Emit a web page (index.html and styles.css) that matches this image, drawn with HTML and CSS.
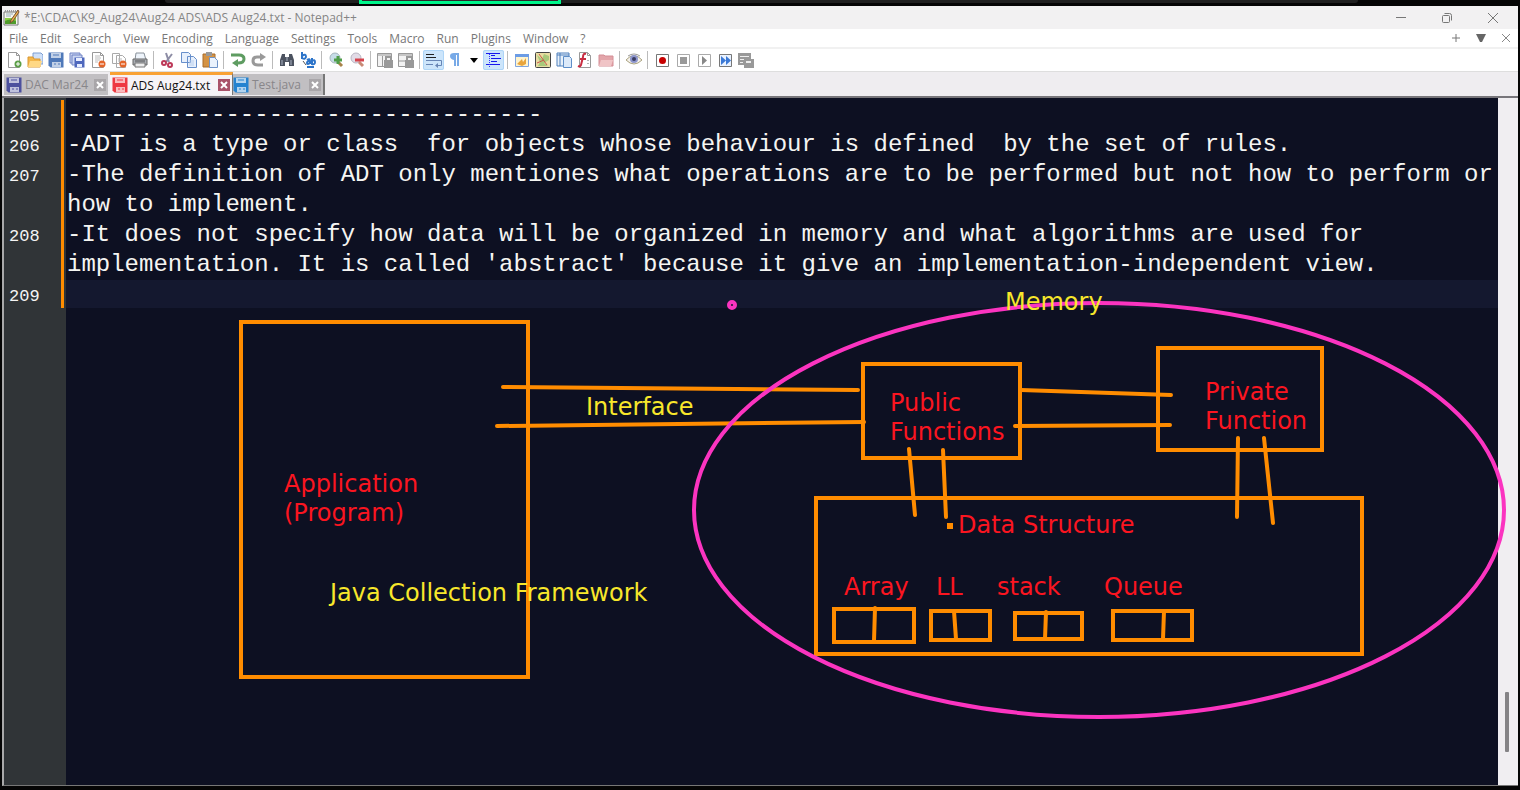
FILE: index.html
```html
<!DOCTYPE html>
<html lang="en">
<head>
<meta charset="utf-8">
<title>*E:\CDAC\K9_Aug24\Aug24 ADS\ADS Aug24.txt - Notepad++</title>
<link rel="stylesheet" href="styles.css">
</head>
<body>
<svg class="symbols" aria-hidden="true">
  <symbol id="floppy" viewBox="0 0 16 16"><path d="M0.500.5h15v15h-13l-2-2z" fill="currentColor"/><path d="M3 1h10v5H3zM4 10h9v5H4z" fill="#fff" opacity=".65"/><path d="M5 3h6M1 8h14M6 12h2M10 12h2" stroke="currentColor" stroke-width="1"/></symbol>
  <symbol id="page" viewBox="0 0 16 16"><path d="M2.500.5h8l3 3v12h-11z" fill="#fff" stroke="#999"/><path d="M10.500.5v3h3" fill="none" stroke="#999"/></symbol>
  <symbol id="cross" viewBox="0 0 12 12"><path d="M0 0h12v12H0z" fill="currentColor"/><path d="M3 3l6 6M9 3l-6 6" stroke="#fff" stroke-width="2"/></symbol>
</svg>

<div class="screen">
  <div class="share-strip"><div class="share-bar"></div><div class="share-box"></div></div>
  <div class="window">
    <header class="titlebar">
      <svg class="app-icon" viewBox="0 0 17 17"><path d="M1 3h14v13H1z" fill="#f6f8ee" stroke="#777"/><path d="M2 9h11v6H2z" fill="#8ccf45"/><path d="M2 12q5-3 11 0v3H2z" fill="#4f9c2b"/><path d="M2 2h12" stroke="#999" stroke-width="2" stroke-dasharray="1 1"/><path d="M3 5h7M3 7h5" stroke="#9ab"/><path d="M15 1L8 11l-1 3 3-2 6-9z" fill="#efb34d" stroke="#775232"/></svg>
      <h1 class="title">*E:\CDAC\K9_Aug24\Aug24 ADS\ADS Aug24.txt - Notepad++</h1>
      <div class="window-buttons">
        <button aria-label="Minimize"><svg viewBox="0 0 12 12"><path d="M1 5.500h10"/></svg></button>
        <button aria-label="Restore"><svg viewBox="0 0 12 12"><rect x="1.500" y="3.500" width="7" height="7" rx="1"/><path d="M3.500 1.500h5q2 0 2 2v5"/></svg></button>
        <button aria-label="Close"><svg viewBox="0 0 12 12"><path d="M1 1l10 10M11 1L1 11"/></svg></button>
      </div>
    </header>

    <nav class="menubar">
      <button>File</button><button>Edit</button><button>Search</button><button>View</button><button>Encoding</button><button>Language</button><button>Settings</button><button>Tools</button><button>Macro</button><button>Run</button><button>Plugins</button><button>Window</button><button>?</button>
      <div class="menu-right">
        <button aria-label="New tab"><svg viewBox="0 0 10 10"><path d="M5 1v8M1 5h8" stroke="#777"/></svg></button>
        <button aria-label="Tab list"><svg viewBox="0 0 10 10"><path d="M0 1h10L6 9H4z" fill="#666"/></svg></button>
        <button aria-label="Close tab"><svg viewBox="0 0 10 10"><path d="M1 1l8 8M9 1L1 9" stroke="#888"/></svg></button>
      </div>
    </nav>

    <div class="toolbar" role="toolbar" aria-label="Main">
      <button aria-label="New"><svg viewBox="0 0 16 16"><use href="#page"/><circle cx="12" cy="12" r="3.500" fill="#5c9f48"/><path d="M12 10v4M10 12h4" stroke="#fff"/></svg></button>
      <button aria-label="Open"><svg viewBox="0 0 16 16"><path d="M6 1h8l2 2v9H6z" fill="#cfe0f8" stroke="#7c9ed2"/><path d="M1 5h5l1 2h6v8H1z" fill="#f4b74b" stroke="#d99730"/><path d="M3 9h12l-2 6H1z" fill="#ffd884"/></svg></button>
      <button aria-label="Save"><svg class="blue" viewBox="0 0 16 16"><use href="#floppy"/></svg></button>
      <button aria-label="Save all"><svg viewBox="0 0 16 16"><path d="M1 1h10v10H1z" fill="#cbd6f2" stroke="#7183c4"/><path d="M3 3h10v10H3z" fill="#cbd6f2" stroke="#7183c4"/><path d="M5.500 5.500h10v10h-10z" fill="#4f68bd"/><path d="M7 6h6v3H7zM8 12h5v3H8z" fill="#e8eeff"/></svg></button>
      <button aria-label="Close"><svg viewBox="0 0 16 16"><use href="#page"/><path d="M5 4h5M5 6h6M5 8h5M5 10h3" stroke="#bbb"/><circle cx="12" cy="12" r="3.500" fill="#e4652a"/><path d="M10 12h4" stroke="#fff"/></svg></button>
      <button aria-label="Close all"><svg viewBox="0 0 16 16"><path d="M1.500 1.500h7v10h-7zM5.500 3.500h6l3 3v9h-9z" fill="#fff" stroke="#aaa"/><path d="M7 7h4M7 9h4" stroke="#bbb"/><circle cx="12" cy="12" r="3.500" fill="#e4652a"/><path d="M10 12h4" stroke="#fff"/></svg></button>
      <button aria-label="Print"><svg viewBox="0 0 16 16"><path d="M4 1h8l2 7H3z" fill="#eef4fb" stroke="#8a929b"/><path d="M1 7h14v6H1z" fill="#aaaeb4" stroke="#666"/><path d="M3 11h10v4H3z" fill="#eee" stroke="#777"/><path d="M3 9h10" stroke="#555"/></svg></button>
      <span class="sep"></span>
      <button aria-label="Cut"><svg viewBox="0 0 16 16"><path d="M6 1l3 9M12 2L6 10" stroke="#8d8da5" stroke-width="2"/><circle cx="4" cy="11" r="2" fill="none" stroke="#bd3958" stroke-width="2"/><circle cx="10" cy="13" r="2" fill="none" stroke="#bd3958" stroke-width="2"/></svg></button>
      <button aria-label="Copy"><svg viewBox="0 0 16 16"><path d="M.5.500h7l2 2v8h-9zM6.500 4.500h6l3 3v8h-9z" fill="#e7f0fc" stroke="#678fcb"/><path d="M8 9h5M8 11h5M8 13h5" stroke="#b9cfee"/></svg></button>
      <button aria-label="Paste"><svg viewBox="0 0 16 16"><path d="M1 2h12v13H1z" fill="#d49344" stroke="#a96c2b"/><path d="M4 0h6v4H4z" fill="#999"/><path d="M7.500 5.500h5l3 3v7h-8z" fill="#eaf2fc" stroke="#6f93c7"/></svg></button>
      <span class="sep"></span>
      <button aria-label="Undo"><svg viewBox="0 0 16 16"><path d="M1 3h8q5 0 5 4t-6 4H6" fill="none" stroke="#5e9c61" stroke-width="3"/><path d="M8 7v8l-6-4z" fill="#5e9c61"/></svg></button>
      <button aria-label="Redo"><svg viewBox="0 0 16 16"><path d="M10 5H6q-4 0-4 4t5 4h5" fill="none" stroke="#999" stroke-width="3"/><path d="M9 1v8l6-4z" fill="#999"/></svg></button>
      <span class="sep"></span>
      <button aria-label="Find"><svg viewBox="0 0 16 16"><path d="M3 2h3v3h4V2h3l2 6v6h-5v-4H6v4H1V8z" fill="#4c5360"/><path d="M3 8v5M12 8v5M8 5v4" stroke="#aab4c4"/></svg></button>
      <button aria-label="Replace"><svg viewBox="0 0 16 16"><path d="M2 0v7M2 4q4-3 4 1-1 3-4 1" fill="none" stroke="#2c74c9" stroke-width="2"/><path d="M7 8q3-2 3 1v3M10 9q-3 0-3 2t3 0M12 6v6q3 1 3-2t-3-1M7 15h7" fill="none" stroke="#2c74c9" stroke-width="2"/><path d="M3 9l3 4" stroke="#555"/></svg></button>
      <span class="sep"></span>
      <button aria-label="Zoom in"><svg viewBox="0 0 16 16"><circle cx="7" cy="6" r="5" fill="#c7dde8" stroke="#a6b5bd"/><path d="M10 10l4 4" stroke="#a88349" stroke-width="3"/><path d="M10 4v8M6 8h8" stroke="#4f9d49" stroke-width="3"/></svg></button>
      <button aria-label="Zoom out"><svg viewBox="0 0 16 16"><circle cx="7" cy="6" r="5" fill="#e2dbe6" stroke="#b9b5c2"/><path d="M10 10l4 4" stroke="#c98a76" stroke-width="3"/><path d="M6 8h9" stroke="#d5434d" stroke-width="3"/></svg></button>
      <span class="sep"></span>
      <button aria-label="Sync vertical"><svg viewBox="0 0 16 16"><path d="M.5 1.500h14v13H.5zM1 3h13M5.500 4v10" fill="#f3f3f3" stroke="#999"/><path d="M7 8h9v8H7z" fill="#999"/><path d="M9 8V5h5v3" fill="none" stroke="#999" stroke-width="2"/></svg></button>
      <button aria-label="Sync horizontal"><svg viewBox="0 0 16 16"><path d="M.5 1.500h14v13H.5zM1 3h13M1 9h8" fill="#f3f3f3" stroke="#999"/><path d="M7 8h9v8H7z" fill="#999"/><path d="M9 8V5h5v3" fill="none" stroke="#999" stroke-width="2"/></svg></button>
      <span class="sep"></span>
      <button class="on" aria-label="Word wrap" aria-pressed="true"><svg viewBox="0 0 16 16"><path d="M0 2.500h8M0 5.500h10" stroke="#222"/><path d="M0 8.500h15.500v5h-4M0 12.500h7" fill="none" stroke="#6785b5"/><path d="M12 11v5l-3-2.500z" fill="#6785b5"/></svg></button>
      <button aria-label="Show all characters"><svg viewBox="0 0 16 16"><path d="M12 1H7q-4 0-4 3t4 4v6h2V3h1v11h2z" fill="#78aae7"/></svg></button>
      <button class="narrow" aria-label="Symbols"><svg viewBox="0 0 16 16"><path d="M4 6h8l-4 5z" fill="#000"/></svg></button>
      <button class="on" aria-label="Indent guide" aria-pressed="true"><svg viewBox="0 0 16 16"><path d="M0 1.500h14M5 3.500h4M5 6.500h10M5 9.500h6M0 12.500h14" stroke="#1717ed"/><path d="M3.500 2v13" stroke="#33f" stroke-dasharray="1 1"/></svg></button>
      <span class="sep"></span>
      <button aria-label="User language"><svg viewBox="0 0 16 16"><path d="M1.500 2.500h13v12h-13z" fill="#fff4cd" stroke="#82a6de"/><path d="M1 2h14v3H1z" fill="#6c9ce5"/><path d="M3 12l5-5 1 3 3-4v6l-4 2z" fill="#e9a53c"/></svg></button>
      <button aria-label="Document map"><svg viewBox="0 0 16 16"><rect x=".5" y=".5" width="15" height="15" rx="1" fill="#e8dda2" stroke="#444"/><path d="M2 3l5 4 2-5 5 2v4l-5 3 4 3H3l2-4z" fill="#a9c97b"/><path d="M4 2l8 11M2 11l7-3" stroke="#cb584a"/></svg></button>
      <button aria-label="Document list"><svg viewBox="0 0 16 16"><path d="M1 1h12v13H1z" fill="#e8f1fa" stroke="#4e80bd"/><path d="M1 3h12M4 1v13" stroke="#4e80bd"/><path d="M7.500 4.500h6l2 2v9h-8z" fill="#dceafa" stroke="#5d8ec8"/></svg></button>
      <button aria-label="Function list"><svg viewBox="0 0 16 16"><use href="#page"/><path d="M9 2Q6 1 6 5L4 13q-1 2-3 1M3 7h6" fill="none" stroke="#c92d42" stroke-width="2"/><path d="M11 8v1M11 11v1" stroke="#666"/></svg></button>
      <button aria-label="Folder as workspace"><svg viewBox="0 0 16 16"><path d="M1 3h5l1 1h8v10H1z" fill="#e3a5aa" stroke="#d48e96"/><path d="M3 8h12l-2 6H1z" fill="#f0c4c6"/></svg></button>
      <span class="sep"></span>
      <button aria-label="Monitoring"><svg viewBox="0 0 16 16"><path d="M0 8q8-9 16 0-8 8-16 0z" fill="#f4f1ec" stroke="#aaa27f"/><circle cx="8" cy="7" r="4" fill="#8c95cc"/><circle cx="8" cy="7" r="2" fill="#393b61"/><path d="M2 4q6-4 12 0" fill="none" stroke="#999"/></svg></button>
      <span class="sep"></span>
      <button aria-label="Record"><svg viewBox="0 0 16 16"><path d="M2.500 2.500h12v12h-12z" fill="#fff" stroke="#777"/><circle cx="8.500" cy="8.500" r="3.500" fill="#c80000"/></svg></button>
      <button aria-label="Stop"><svg viewBox="0 0 16 16"><path d="M2.500 2.500h12v12h-12z" fill="#fff" stroke="#aaa"/><path d="M5 5h7v7H5z" fill="#999"/></svg></button>
      <button aria-label="Play"><svg viewBox="0 0 16 16"><path d="M2.500 2.500h12v12h-12z" fill="#fff" stroke="#aaa"/><path d="M6 4l5 4.500-5 4.500z" fill="#888"/></svg></button>
      <button aria-label="Play multiple"><svg viewBox="0 0 16 16"><path d="M2.500 2.500h12v12h-12z" fill="#e9f2ff" stroke="#777"/><path d="M4 4l5 4.500L4 13zM9 4l5 4.500L9 13z" fill="#3b79d6"/></svg></button>
      <button aria-label="Save macro"><svg viewBox="0 0 16 16"><path d="M0 1h13v12H0z" fill="#999"/><path d="M2 4.500h9M2 7.500h4M2 10.500h3" stroke="#eee"/><path d="M6 7h10v9H6z" fill="#999"/><path d="M8 10h5" stroke="#eee" stroke-width="2"/></svg></button>
    </div>

    <div class="tabs" role="tablist">
      <div class="tab first"><svg class="disk purple"><use href="#floppy"/></svg><button role="tab">DAC Mar24</button><button class="tab-close" aria-label="Close DAC Mar24"><svg><use href="#cross"/></svg></button></div>
      <div class="tab active"><svg class="disk red"><use href="#floppy"/></svg><button role="tab" aria-selected="true">ADS Aug24.txt</button><button class="tab-close" aria-label="Close ADS Aug24.txt"><svg><use href="#cross"/></svg></button></div>
      <div class="tab last"><svg class="disk azure"><use href="#floppy"/></svg><button role="tab">Test.java</button><button class="tab-close" aria-label="Close Test.java"><svg><use href="#cross"/></svg></button></div>
    </div>

    <main class="editor">
      <div class="document">
        <div class="row"><span class="number">205</span><p>---------------------------------</p></div>
        <div class="row"><span class="number">206</span><p>-ADT is a type or class  for objects whose behaviour is defined  by the set of rules.</p></div>
        <div class="row"><span class="number">207</span><p>-The definition of ADT only mentiones what operations are to be performed but not how to perform or how to implement.</p></div>
        <div class="row"><span class="number">208</span><p>-It does not specify how data will be organized in memory and what algorithms are used for implementation. It is called 'abstract' because it give an implementation-independent view.</p></div>
        <div class="row current"><span class="number">209</span><p></p></div>
      </div>
      <div class="scrollbar"><div class="thumb"></div></div>
    </main>
  </div>

  <svg class="drawing" width="1520" height="790" role="img" aria-label="Abstract data type diagram">
    <g class="strokes">
      <rect x="241" y="322" width="287" height="355"/>
      <rect x="863" y="364" width="157" height="94"/>
      <rect x="1158" y="348" width="164" height="102"/>
      <rect x="816" y="498" width="546" height="156"/>
      <rect x="834" y="609" width="80" height="33"/>
      <rect x="931" y="611" width="59" height="29"/>
      <rect x="1015" y="613" width="67" height="26"/>
      <rect x="1113" y="611" width="79" height="29"/>
      <path d="M503 387L858 390M497 426L864 422M1021 390L1171 395M1015 426L1170 425M909 449L915 515M943 450L946 517M1238 438L1237 517M1264 438L1273 523M875 608L874 641M954 611L956 639M1046 612L1045 639M1164 611L1163 639"/>
    </g>
    <rect x="947" y="523" width="6" height="6" fill="#ff8c00"/>
    <ellipse cx="1099" cy="510" rx="405" ry="207" class="memory-ring"/>
    <circle cx="732" cy="305" r="3" class="memory-ring"/>
    <g class="labels yellow">
      <text x="1005" y="310">Memory</text>
      <text x="586" y="415">Interface</text>
      <text x="330" y="601">Java Collection Framework</text>
    </g>
    <g class="labels red">
      <text x="284" y="492">Application</text><text x="284" y="521">(Program)</text>
      <text x="890" y="411">Public</text><text x="890" y="440">Functions</text>
      <text x="1205" y="400">Private</text><text x="1205" y="429">Function</text>
      <text x="958" y="533">Data Structure</text>
      <text x="844" y="595">Array</text><text x="936" y="595">LL</text><text x="997" y="595">stack</text><text x="1104" y="595">Queue</text>
    </g>
  </svg>
</div>
</body>
</html>
```
FILE: styles.css
```css
* { box-sizing: border-box; }

body {
  margin: 0;
  background: #050505;
  font-family: "Open Sans", "Noto Sans", sans-serif;
  font-size: 12px;
  color: #777;
}

button {
  border: 0;
  padding: 0;
  background: none;
  font: inherit;
  color: inherit;
}

svg { display: block; }
.symbols { position: absolute; width: 0; height: 0; }

.screen {
  position: relative;
  display: flex;
  flex-direction: column;
  height: 100vh;
  padding: 0 2px 4px;
  overflow: hidden;
}

.share-strip { position: relative; height: 6px; flex: none; }
.share-bar {
  height: 3px;
  margin: 0 160px 0 163px;
  background: #202020;
  border-radius: 0 0 4px 4px;
}
.share-box {
  position: absolute;
  top: 0;
  left: 357px;
  width: 202px;
  height: 4px;
  background: #30262c;
  border: solid #00f68b;
  border-width: 0 3px 3px;
}

.window { flex: 1; min-height: 0; display: flex; flex-direction: column; }

.titlebar {
  display: flex;
  align-items: center;
  height: 23px;
  padding: 0 19px 0 1px;
  background: #f2f1f2;
}
.app-icon { width: 17px; height: 17px; margin-right: 4px; }
.title { margin: 0; font-size: 12px; font-weight: 400; color: #858585; }
.window-buttons { display: flex; gap: 34px; margin-left: auto; }
.window-buttons svg { width: 12px; height: 12px; fill: none; stroke: #777; }

.menubar {
  display: flex;
  align-items: center;
  gap: 12px;
  height: 20px;
  padding: 0 7px;
  background: #fff;
  border-bottom: 2px solid #f1f1f1;
}
.menu-right { display: flex; gap: 15px; margin-left: auto; }
.menu-right svg { width: 10px; height: 10px; fill: none; }

.toolbar {
  display: flex;
  align-items: center;
  height: 23px;
  padding-left: 1px;
  background: #fff;
  border-bottom: 1px solid #dedede;
}
.toolbar button {
  flex: none;
  display: grid;
  place-items: center;
  width: 21px;
  height: 20px;
}
.toolbar svg { width: 16px; height: 16px; }
.toolbar .narrow { width: 18px; }
.toolbar .on { background: #cce5fb; outline: 1px solid #aed5f7; outline-offset: -1px; border-radius: 2px; }
.sep { width: 1px; height: 18px; margin: 0 3px; background: #bbb; }
.blue { color: #4f79b9; }

.tabs {
  display: flex;
  align-items: flex-end;
  height: 26px;
  padding: 0 2px 1px;
  background: #efedf0;
  border-bottom: 2px solid #77757a;
}
.tab {
  display: flex;
  align-items: center;
  height: 21px;
  padding: 0 2px;
  background: #c1bfc2;
  color: #88868a;
}
.tab.first { width: 104px; margin-right: 2px; }
.tab.active {
  width: 123px;
  height: 23px;
  background: #f6f4f7;
  color: #111;
  border-top: 3px solid #f9a234;
  border-right: 1px solid #777;
}
.tab.last { width: 92px; padding-left: 0; border-right: 2px solid #777; }
.disk { width: 16px; height: 16px; margin-right: 3px; }
.purple { color: #4c509e; }
.red { color: #ee3942; }
.azure { color: #2583d0; }
.tab-close { margin-left: auto; color: #a9a6a9; }
.active .tab-close { color: #a95369; }
.tab-close svg { width: 12px; height: 12px; }

.editor {
  flex: 1;
  min-height: 0;
  display: flex;
  background: #0d1022;
  border-left: 2px solid #a9a9aa;
  border-bottom: 1px solid #777;
}
.document {
  flex: 1;
  min-width: 0;
  padding-top: 2px;
  background: linear-gradient(to right, #303437 62px, transparent 62px);
}
.row { display: flex; }
.number {
  flex: none;
  width: 60px;
  padding: 3px 5px 0;
  border-right: 3px solid #ff8c00;
  font: 17px/27px "Liberation Mono", monospace;
  color: #f4f4f4;
}
.row p {
  flex: 1;
  min-width: 0;
  margin: 0 0 0 2px;
  padding-left: 1px;
  font: 24px/30px "Liberation Mono", monospace;
  white-space: pre-wrap;
  color: #f5f5f2;
}
.current { height: 28px; }
.current p { background: #14182f; }
.scrollbar { width: 20px; padding: 594px 9px 0 7px; background: #f0eef1; }
.thumb { height: 60px; background: #858386; border-radius: 1px; }

/* Screen annotations drawn over the editor */
.drawing { position: absolute; top: 0; left: 0; pointer-events: none; }
.labels { font: 24px "DejaVu Sans", sans-serif; }
.yellow { fill: #f8e72b; }
.red.labels { fill: #fb1520; }
.strokes { fill: none; stroke: #ff8c00; stroke-width: 4; stroke-linecap: round; }
.memory-ring { fill: none; stroke: #fb34c0; stroke-width: 4; }
```
